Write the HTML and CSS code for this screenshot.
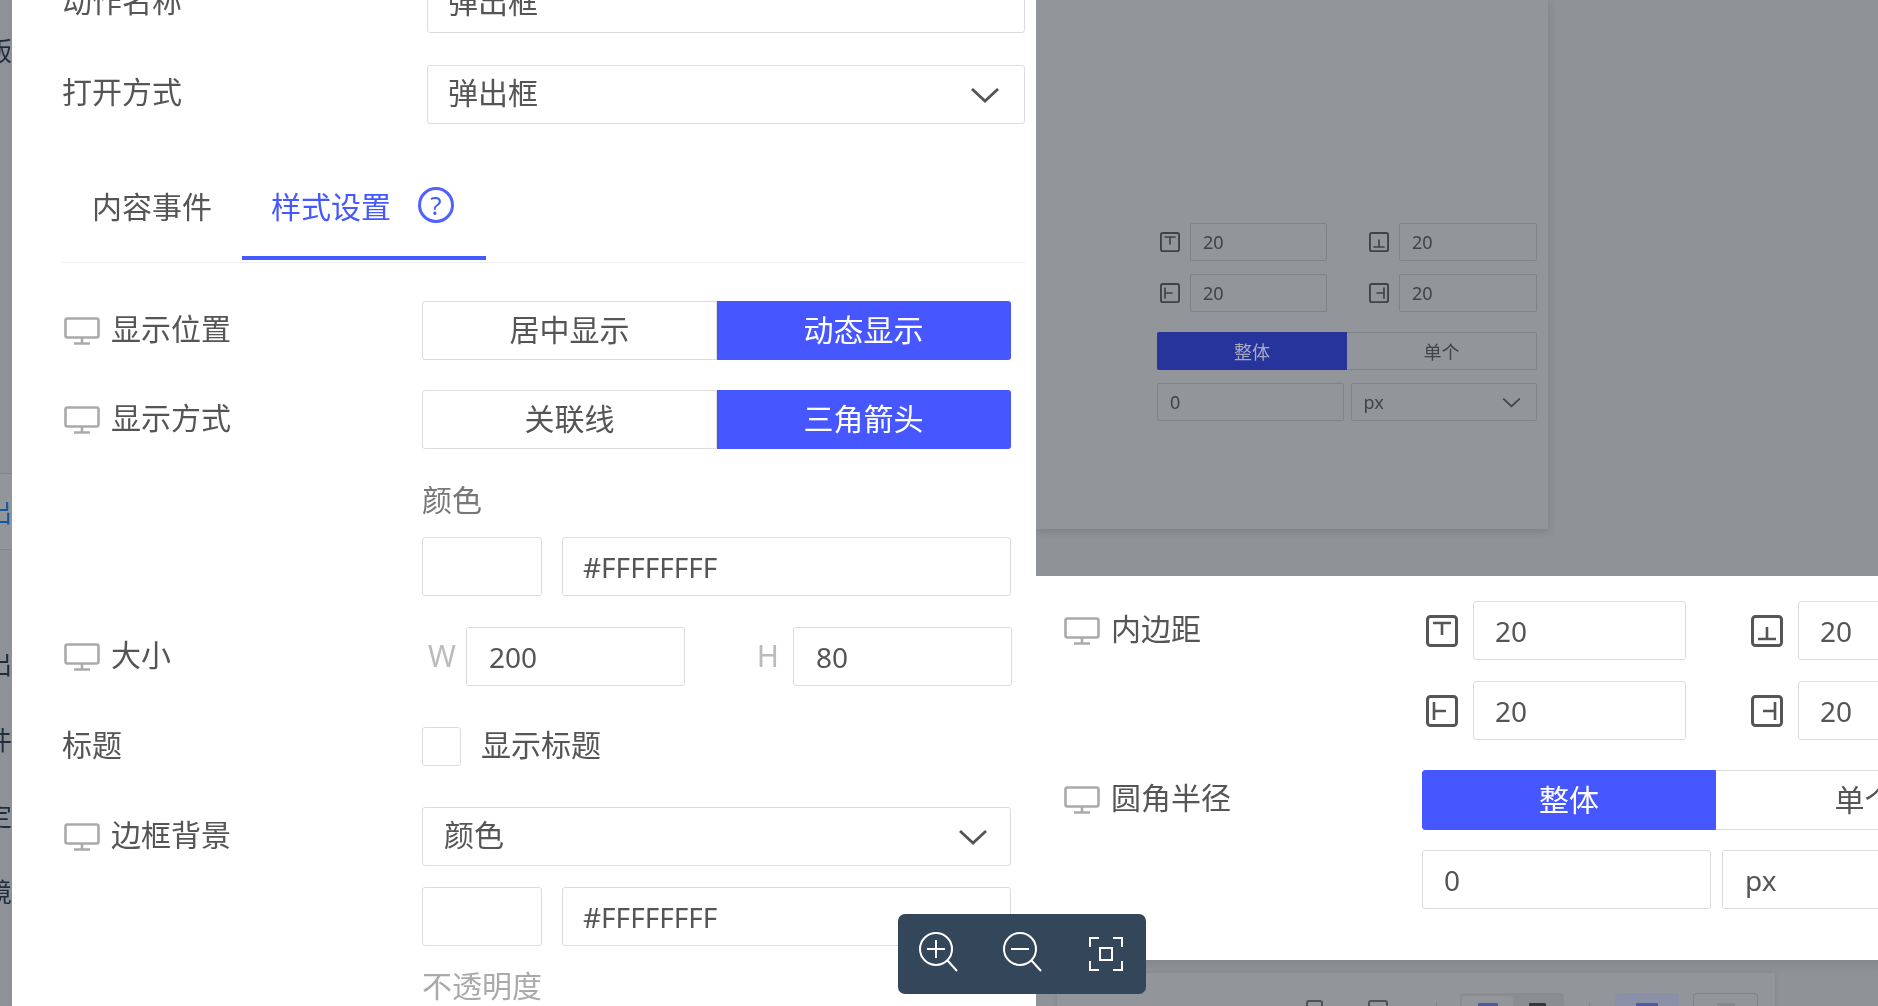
FILE: index.html
```html
<!DOCTYPE html>
<html lang="zh-CN">
<head>
<meta charset="utf-8">
<title>弹出框设置</title>
<link rel="stylesheet" href="styles.css">
</head>
<body>
<svg class="sprite" width="0" height="0" aria-hidden="true">
  <symbol id="monitor" viewBox="0 0 36 28"><rect x="1.5" y="1.5" width="33" height="19" rx="2" fill="none" stroke="currentColor" stroke-width="2.6"/><path d="M18 21v5M10 26.5h16" fill="none" stroke="currentColor" stroke-width="2.6"/></symbol>
  <symbol id="chev" viewBox="0 0 30 16"><path d="M2 2l13 12L28 2" fill="none" stroke="currentColor" stroke-width="2.8"/></symbol>
  <symbol id="pad-t" viewBox="0 0 32 32"><rect x="1.5" y="1.5" width="29" height="29" rx="3" fill="none" stroke="currentColor" stroke-width="3"/><path d="M7 8h18M16 8v12" fill="none" stroke="currentColor" stroke-width="2.6"/></symbol>
  <symbol id="pad-b" viewBox="0 0 32 32"><rect x="1.5" y="1.5" width="29" height="29" rx="3" fill="none" stroke="currentColor" stroke-width="3"/><path d="M7 24h18M16 24V12" fill="none" stroke="currentColor" stroke-width="2.6"/></symbol>
  <symbol id="pad-l" viewBox="0 0 32 32"><rect x="1.5" y="1.5" width="29" height="29" rx="3" fill="none" stroke="currentColor" stroke-width="3"/><path d="M8 7v18M8 16h12" fill="none" stroke="currentColor" stroke-width="2.6"/></symbol>
  <symbol id="pad-r" viewBox="0 0 32 32"><rect x="1.5" y="1.5" width="29" height="29" rx="3" fill="none" stroke="currentColor" stroke-width="3"/><path d="M24 7v18M24 16H12" fill="none" stroke="currentColor" stroke-width="2.6"/></symbol>
</svg>

<div class="page">
  <nav class="strip">
    <div class="strip-item strip-first">版</div>
    <div class="strip-item strip-active">出</div>
    <div class="strip-item strip-after">出</div>
    <div class="strip-item">件</div>
    <div class="strip-item">定</div>
    <div class="strip-item">境</div>
  </nav>

  <section class="left">
    <div class="top-field top-first">
      <div class="top-label">动作名称</div>
      <div class="box top-box">弹出框</div>
    </div>
    <div class="top-field top-second">
      <div class="top-label">打开方式</div>
      <div class="box top-box select">弹出框<svg class="chev"><use href="#chev"/></svg></div>
    </div>

    <div class="tabs">
      <div class="tab tab-plain">内容事件</div>
      <div class="tab tab-active">样式设置<span class="help">?</span></div>
    </div>

    <div class="row row-first">
      <div class="label"><svg class="mon"><use href="#monitor"/></svg><span class="t">显示位置</span></div>
      <div class="seg"><div class="seg-item">居中显示</div><div class="seg-item on">动态显示</div></div>
    </div>
    <div class="row row-30">
      <div class="label"><svg class="mon"><use href="#monitor"/></svg><span class="t">显示方式</span></div>
      <div class="seg"><div class="seg-item">关联线</div><div class="seg-item on">三角箭头</div></div>
    </div>
    <div class="sub-label sub-color">颜色</div>
    <div class="row row-color">
      <div class="box swatch"></div>
      <div class="box hex latin">#FFFFFFFF</div>
    </div>
    <div class="row row-size">
      <div class="label"><svg class="mon"><use href="#monitor"/></svg><span class="t">大小</span></div>
      <div class="wh wh-w">W</div>
      <div class="box dim-input latin">200</div>
      <div class="wh wh-h">H</div>
      <div class="box dim-input latin">80</div>
    </div>
    <div class="row row-check">
      <div class="label label-plain"><span class="t">标题</span></div>
      <div class="check"></div>
      <div class="check-text t">显示标题</div>
    </div>
    <div class="row row-border">
      <div class="label"><svg class="mon"><use href="#monitor"/></svg><span class="t">边框背景</span></div>
      <div class="box wide select">颜色<svg class="chev"><use href="#chev"/></svg></div>
    </div>
    <div class="row row-color2">
      <div class="box swatch"></div>
      <div class="box hex latin">#FFFFFFFF</div>
    </div>
    <div class="sub-label sub-opacity">不透明度</div>
  </section>

  <section class="right">
    <div class="dim-area">
      <div class="dim-card">
        <div class="dim-grid">
          <svg class="dim-icon"><use href="#pad-t"/></svg><div class="dim-box latin">20</div>
          <svg class="dim-icon dim-icon-end"><use href="#pad-b"/></svg><div class="dim-box latin">20</div>
          <svg class="dim-icon"><use href="#pad-l"/></svg><div class="dim-box latin">20</div>
          <svg class="dim-icon dim-icon-end"><use href="#pad-r"/></svg><div class="dim-box latin">20</div>
        </div>
        <div class="dim-seg"><div class="dim-seg-item dim-on">整体</div><div class="dim-seg-item">单个</div></div>
        <div class="dim-pair">
          <div class="dim-box latin">0</div>
          <div class="dim-box latin dim-select">px<svg class="dim-chev"><use href="#chev"/></svg></div>
        </div>
      </div>
    </div>

    <div class="white-area">
      <div class="r-row">
        <div class="r-label"><svg class="mon"><use href="#monitor"/></svg><span class="t">内边距</span></div>
        <div class="pad-grid">
          <svg class="pad-icon"><use href="#pad-t"/></svg><div class="box pad-box latin">20</div>
          <svg class="pad-icon pad-icon-end"><use href="#pad-b"/></svg><div class="box pad-box latin">20</div>
          <svg class="pad-icon"><use href="#pad-l"/></svg><div class="box pad-box latin">20</div>
          <svg class="pad-icon pad-icon-end"><use href="#pad-r"/></svg><div class="box pad-box latin">20</div>
        </div>
      </div>
      <div class="r-row r-row-radius">
        <div class="r-label"><svg class="mon"><use href="#monitor"/></svg><span class="t">圆角半径</span></div>
        <div class="radius">
          <div class="seg seg-r"><div class="seg-item on">整体</div><div class="seg-item">单个</div></div>
          <div class="radius-pair">
            <div class="box radius-val latin">0</div>
            <div class="box radius-unit latin">px</div>
          </div>
        </div>
      </div>
    </div>

    <div class="bottom-area">
      <div class="bottom-card">
        <span class="tool tool-a"></span>
        <span class="tool tool-b"></span>
        <span class="sep sep-a"></span>
        <div class="tool-group">
          <div class="tool-tab"><span class="mini mini-blue"></span></div>
          <div class="tool-tab2"><span class="mini mini-dark"></span></div>
        </div>
        <span class="sep sep-b"></span>
        <div class="tool-blue"><span class="mini mini-blue2"></span></div>
        <div class="tool-outline"><span class="mini mini-gray"></span></div>
      </div>
    </div>
  </section>

  <div class="zoombar">
    <svg class="zb-icon zb-in" viewBox="0 0 42 42"><circle cx="18" cy="18" r="16" fill="none" stroke="#fff" stroke-width="2"/><path d="M9 18h18M18 9v18M29.500 29.500L39 40" fill="none" stroke="#fff" stroke-width="2"/></svg>
    <svg class="zb-icon zb-out" viewBox="0 0 42 42"><circle cx="18" cy="18" r="16" fill="none" stroke="#fff" stroke-width="2"/><path d="M9 18h18M29.500 29.500L39 40" fill="none" stroke="#fff" stroke-width="2"/></svg>
    <svg class="zb-icon zb-frame" viewBox="0 0 36 36"><path d="M11 2H2v9M25 2h9v9M2 25v9h9M34 25v9h-9" fill="none" stroke="#fff" stroke-width="2"/><rect x="12" y="12" width="12" height="12" fill="none" stroke="#fff" stroke-width="2"/></svg>
  </div>
</div>
</body>
</html>
```
FILE: styles.css
```css
* { box-sizing: border-box; }
html, body { margin: 0; padding: 0; background: #92959a; }
body { overflow: hidden; }
.sprite { position: absolute; }

.page {
  position: relative;
  width: 1878px;
  height: 1006px;
  display: flex;
  overflow: hidden;
  font-family: "Noto Sans", "Noto Sans CJK SC", sans-serif;
  font-size: 30px;
  color: #555;
  background: #92959a;
  filter: blur(0.6px);
}
.latin { font-size: 28px; }
.t { display: block; padding-bottom: 7px; }

/* left clipped nav */
.strip {
  width: 12px;
  flex: none;
  overflow: hidden;
  background: #8e9196;
  color: #1f2d3d;
  font-size: 26px;
  display: flex;
  flex-direction: column;
}
.strip-item {
  height: 76px;
  flex: none;
  display: flex;
  align-items: center;
  justify-content: flex-end;
  white-space: nowrap;
  padding-bottom: 3px;
}
.strip-first { margin-top: 13px; }
.strip-active {
  margin-top: 384px;
  height: 77px;
  padding-bottom: 1px;
  color: #14589f;
  background: #92959a;
  border-top: 1px solid #83868b;
  border-bottom: 1px solid #83868b;
}
.strip-after { margin-top: 76px; }

/* left panel */
.left {
  width: 1024px;
  height: 1006px;
  flex: none;
  background: #fff;
  padding-left: 50px;
  overflow: hidden;
}
.box {
  display: flex;
  align-items: center;
  height: 59px;
  border: 1px solid #dcdcdc;
  border-radius: 3px;
  background: #fff;
  flex: none;
  padding-bottom: 7px;
}
.box.latin { padding-bottom: 0; }
.top-field { display: flex; align-items: center; }
.top-first { margin-top: -26px; }
.top-second { margin-top: 32px; }
.top-label { width: 365px; flex: none; padding-bottom: 10px; }
.top-box { width: 598px; padding-left: 20px; padding-right: 20px; }
.chev { width: 30px; height: 16px; color: #555; margin-left: auto; flex: none; margin-top: 7px; }
.top-box .chev { margin-right: 4px; }

.tabs {
  margin-top: 31px;
  width: 963px;
  height: 108px;
  display: flex;
  border-bottom: 1px solid #eee;
}
.tab {
  height: 105px;
  display: flex;
  align-items: center;
  border-bottom: 4px solid transparent;
}
.tab-plain { width: 180px; padding-left: 30px; padding-bottom: 2px; }
.tab-active {
  width: 244px;
  padding-left: 29px;
  padding-bottom: 2px;
  color: #4458ff;
  border-bottom-color: #4458ff;
}
.help {
  width: 36px;
  height: 36px;
  margin-left: 27px;
  border: 3px solid #4f62ff;
  border-radius: 50%;
  display: flex;
  align-items: center;
  justify-content: center;
  font-size: 26px;
  line-height: 1;
}

.row { display: flex; align-items: center; }
.row-first { margin-top: 38px; }
.row-30 { margin-top: 30px; }
.label { width: 360px; flex: none; display: flex; align-items: center; padding-left: 2px; }
.label-plain { padding-left: 0; }
.mon { width: 36px; height: 28px; color: #aaa; margin-right: 11px; flex: none; }

.seg { display: flex; width: 589px; height: 59px; flex: none; }
.seg-item {
  flex: 1 1 0;
  display: flex;
  align-items: center;
  justify-content: center;
  border: 1px solid #dcdcdc;
  background: #fff;
  border-radius: 3px 0 0 3px;
  padding-bottom: 5px;
}
.seg-item + .seg-item { border-left: 0; border-radius: 0 3px 3px 0; }
.seg-item.on { background: #4757ff; border-color: #4757ff; color: #fff; }

.sub-label { margin-left: 360px; line-height: 44px; height: 44px; }
.sub-color { margin-top: 29px; color: #777; }
.row-color { margin-left: 360px; margin-top: 15px; }
.row-color2 { margin-left: 360px; margin-top: 21px; }
.swatch { width: 120px; }
.hex { width: 449px; margin-left: 20px; padding-left: 20px; }
.row-size { margin-top: 31px; }
.wh { color: #bbb; flex: none; display: flex; justify-content: flex-end; padding-bottom: 3px; }
.wh-w { width: 44px; padding-right: 10px; }
.wh-h { width: 108px; padding-right: 14px; }
.dim-input { width: 219px; padding-left: 22px; }
.row-check { margin-top: 41px; height: 39px; }
.check { width: 39px; height: 39px; border: 1px solid #dcdcdc; border-radius: 3px; flex: none; }
.check-text { margin-left: 20px; }
.row-border { margin-top: 41px; }
.wide { width: 589px; padding-left: 21px; padding-right: 22px; }
.sub-opacity { margin-top: 18px; color: #aaa; }

/* right side */
.right {
  flex: 1 1 auto;
  min-width: 0;
  display: flex;
  flex-direction: column;
  overflow: hidden;
}
.dim-area { height: 576px; flex: none; background: #8f9297; }
.dim-card {
  width: 512px;
  height: 529px;
  background: #929599;
  box-shadow: 0 2px 8px rgba(0,0,0,.14);
  padding: 223px 10px 0 121px;
  font-size: 18px;
  color: #404347;
}
.dim-card .latin { font-size: 18px; }
.dim-grid {
  display: grid;
  grid-template-columns: 20px 137px 52px 138px;
  grid-auto-rows: 38px;
  column-gap: 10px;
  row-gap: 13px;
  margin-left: 3px;
  align-items: center;
}
.dim-icon { width: 20px; height: 20px; color: #3f4246; }
.dim-icon-end { margin-left: 32px; }
.dim-box {
  height: 38px;
  border: 1px solid #7f8286;
  border-radius: 2px;
  display: flex;
  align-items: center;
  padding-left: 12px;
}
.dim-seg { display: flex; height: 38px; margin-top: 20px; width: 380px; }
.dim-seg-item {
  flex: none;
  width: 190px;
  border: 1px solid #7f8286;
  border-left: 0;
  border-radius: 0 2px 2px 0;
  display: flex;
  align-items: center;
  justify-content: center;
}
.dim-on { background: #27349b; color: #a6a9c4; border: 0; border-radius: 2px 0 0 2px; }
.dim-pair { display: flex; gap: 7px; margin-top: 13px; width: 380px; }
.dim-pair .dim-box { width: 186.5px; }
.dim-select { padding-right: 15px; }
.dim-chev { width: 19px; height: 11px; margin-left: auto; color: #3f4246; }

.white-area { height: 384px; flex: none; background: #fff; padding: 25px 0 0 28px; }
.r-row { display: flex; }
.r-row-radius { margin-top: 30px; }
.r-label { width: 358px; flex: none; display: flex; align-items: center; height: 59px; align-self: flex-start; }
.pad-grid {
  display: grid;
  grid-template-columns: 32px 213px 82px 213px;
  grid-auto-rows: 59px;
  column-gap: 15px;
  row-gap: 21px;
  margin-left: 4px;
  align-items: center;
}
.pad-icon { width: 32px; height: 32px; color: #555; }
.pad-icon-end { margin-left: 50px; }
.pad-box { padding-left: 21px; width: 213px; }
.radius { display: flex; flex-direction: column; flex: none; }
.seg-r { width: 592px; height: 60px; }
.seg-r .seg-item { flex: none; width: 294px; }
.seg-r .seg-item + .seg-item { width: 298px; }
.radius-pair { display: flex; gap: 11px; margin-top: 20px; }
.radius-val { width: 289px; padding-left: 21px; }
.radius-unit { width: 292px; padding-left: 22px; }

.bottom-area {
  flex: 1 1 auto;
  padding-top: 13px;
  background: linear-gradient(#85888d, #8f9297 13px);
}
.bottom-card {
  margin-left: 21px;
  width: 718px;
  height: 60px;
  background: #929599;
  box-shadow: 0 0 4px rgba(0,0,0,.1);
  display: flex;
  align-items: flex-start;
}
.tool { height: 8px; margin-top: 27px; border: 2px solid #4f5256; border-bottom: 0; border-radius: 3px 3px 0 0; flex: none; }
.tool-a { width: 17px; margin-left: 249px; }
.tool-b { width: 20px; margin-left: 45px; }
.sep { width: 1px; height: 6px; margin-top: 29px; background: #84878b; flex: none; }
.sep-a { margin-left: 48px; }
.sep-b { margin-left: 25px; }
.tool-group {
  margin-left: 23px;
  width: 104px;
  height: 40px;
  margin-top: 20px;
  background: #8a8d92;
  border-radius: 4px;
  display: flex;
  padding: 3px 2px 0;
}
.tool-tab { width: 51px; background: #929599; border-radius: 3px; display: flex; justify-content: center; }
.tool-tab2 { flex: 1; display: flex; justify-content: center; }
.mini { display: block; width: 20px; height: 6px; margin-top: 7px; border-radius: 1px 1px 0 0; }
.mini-blue { background: #5058a8; }
.mini-dark { width: 17px; background: #36383c; }
.tool-blue { margin-left: 25px; width: 64px; height: 40px; margin-top: 20px; background: #8a90a8; border-radius: 4px; display: flex; justify-content: center; }
.mini-blue2 { background: #5058a8; width: 22px; margin-top: 10px; }
.tool-outline { margin-left: 14px; width: 65px; height: 40px; margin-top: 20px; border: 1px solid #7f8286; border-radius: 3px; display: flex; justify-content: center; }
.mini-gray { background: #85888c; width: 18px; margin-top: 9px; }

/* floating zoom toolbar */
.zoombar {
  position: absolute;
  left: 898px;
  top: 914px;
  width: 248px;
  height: 80px;
  background: #34465a;
  border-radius: 7px;
}
.zb-icon { position: absolute; }
.zb-in, .zb-out { width: 42px; height: 42px; top: 17px; }
.zb-in { left: 20px; }
.zb-out { left: 104px; }
.zb-frame { width: 36px; height: 36px; top: 22px; left: 190px; }
```
